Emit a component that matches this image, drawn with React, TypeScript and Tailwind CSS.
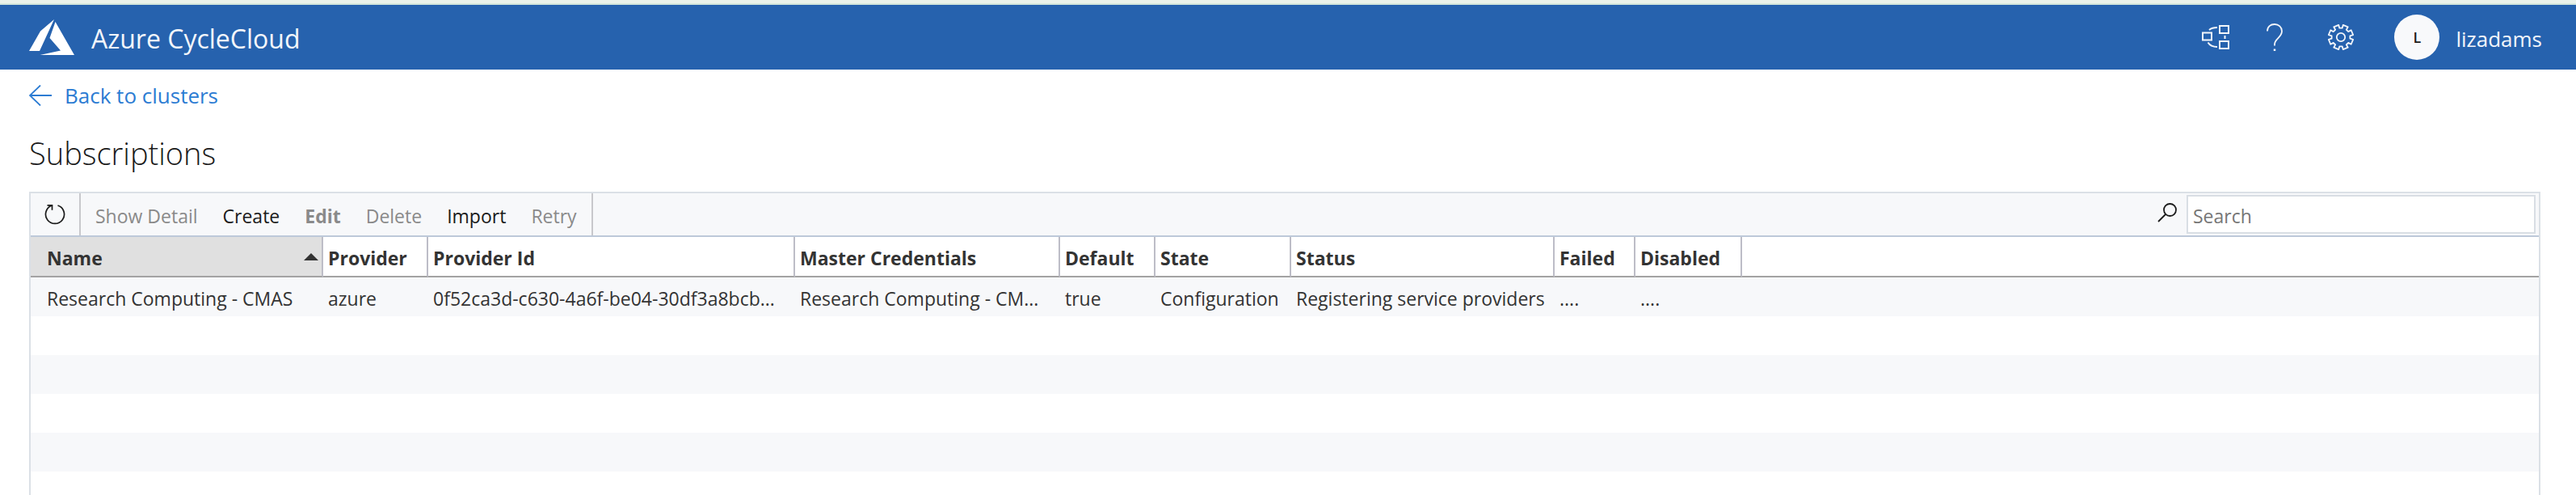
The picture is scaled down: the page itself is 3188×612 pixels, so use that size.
import React from "react";

const columns = [
  { label: "Name", width: "w-[362px]", value: "Research Computing - CMAS" },
  { label: "Provider", width: "w-[130px]", value: "azure" },
  { label: "Provider Id", width: "w-[454px]", value: "0f52ca3d-c630-4a6f-be04-30df3a8bcb..." },
  { label: "Master Credentials", width: "w-[328px]", value: "Research Computing - CM..." },
  { label: "Default", width: "w-[118px]", value: "true" },
  { label: "State", width: "w-[168px]", value: "Configuration" },
  { label: "Status", width: "w-[326px]", value: "Registering service providers" },
  { label: "Failed", width: "w-[100px]", value: "...." },
  { label: "Disabled", width: "w-[132px]", value: "...." },
];

const actions = [
  { label: "Show Detail", style: "text-[#8a8a8a]", disabled: true },
  { label: "Create", style: "text-[#1b1b1b]", disabled: false },
  { label: "Edit", style: "font-bold text-[#8a8a8a]", disabled: true },
  { label: "Delete", style: "text-[#8a8a8a]", disabled: true },
  { label: "Import", style: "text-[#1b1b1b]", disabled: false },
  { label: "Retry", style: "text-[#8a8a8a]", disabled: true },
];

function AzureLogo() {
  return (
    <svg className="h-11 w-14" viewBox="0 0 56 44" fill="#fff" aria-hidden="true">
      <path d="M31 0 14 14.5 0 39h13zM32.5 3l-7 20L39 38.5 13.5 44H56z" />
    </svg>
  );
}

function ClusterIcon() {
  return (
    <svg className="h-[30px] w-[34px]" viewBox="0 0 34 30" fill="none" stroke="#f2f5fa" strokeWidth="2" aria-hidden="true">
      <path d="M22 1h11v9H22zM1 9.500h11v9H1zM22 20h11v9H22zM28.500 13v4" />
      <path d="M9 6q3.500-3 10-3M7.500 21.500Q11 27 19 27" />
    </svg>
  );
}

function HelpIcon() {
  return (
    <svg className="h-[34px] w-5" viewBox="0 0 20 34" fill="none" stroke="#f2f5fa" strokeWidth="1.8" aria-hidden="true">
      <path d="M1 9.500C1 4 5 1 10 1s9 3.500 9 8.500c0 8-9 9-9 16.500v1.500" />
      <path d="M10 31.500V34" strokeWidth="2.5" />
    </svg>
  );
}

function GearIcon() {
  const teeth = Array.from({ length: 8 }, (_, i) => {
    const at = (r: number, d: number) => {
      const a = ((i * 45 + 22.5 + d) * Math.PI) / 180;
      return `${(16 + r * Math.cos(a)).toFixed(2)} ${(16 + r * Math.sin(a)).toFixed(2)}`;
    };
    return `${at(11.5, -14)} L${at(15.4, -12)} L${at(15.4, 12)} L${at(11.5, 14)}`;
  });
  return (
    <svg className="size-8" viewBox="0 0 32 32" fill="none" stroke="#f2f5fa" strokeWidth="1.8" strokeLinejoin="round" aria-hidden="true">
      <path d={`M${teeth.join(" L")}Z`} />
      <circle cx="16" cy="16" r="5.2" />
    </svg>
  );
}

export default function App() {
  return (
    <div className="h-screen overflow-hidden bg-white font-['Open_Sans','Noto_Sans',sans-serif] text-[#333]">
      <div className="h-1.5 border-b-2 border-[#d5e7dc] bg-[#eaf2ea]" />
      <header className="flex h-20 items-center justify-between bg-[#2662ae] pr-[42px] pl-9 text-[#f2f5fa]">
        <div className="flex items-center gap-[21px]">
          <AzureLogo />
          <span className="pt-1 text-[32px] leading-10">Azure CycleCloud</span>
        </div>
        <div className="flex items-center">
          <button type="button" aria-label="Clusters" className="mr-[46px]"><ClusterIcon /></button>
          <button type="button" aria-label="Help" className="mr-14"><HelpIcon /></button>
          <button type="button" aria-label="Settings" className="mr-[50px]"><GearIcon /></button>
          <button type="button" className="flex items-center gap-5 text-[26px]">
            <span className="flex size-14 items-center justify-center rounded-full bg-[#f8f9fb] text-lg font-semibold text-[#1b1b1b]">L</span>
            <span className="pt-1">lizadams</span>
          </button>
        </div>
      </header>

      <main className="flex flex-col px-9">
        <div className="pt-3">
          <a href="#clusters" className="inline-flex items-center gap-4 text-[26px] leading-10 text-[#2c7cd3]">
            <svg className="h-[26px] w-7" viewBox="0 0 28 26" fill="none" stroke="currentColor" strokeWidth="1.8" aria-hidden="true">
              <path d="M28 13H1M14 0.500 1 13l13 12.500" />
            </svg>
            Back to clusters
          </a>
        </div>
        <h1 className="mt-6 text-[38px] leading-[54px] font-light text-[#1b1b1b]">Subscriptions</h1>

        <section className="mr-2 mt-[21px] border-2 border-[#dbe0e6]">
          <div className="flex h-[54px] border-b-2 border-[#bdc9d9] bg-[#f7f8fa]">
            <button type="button" aria-label="Refresh" className="flex w-[62px] items-center justify-center border-r-2 border-[#c8c8cc]">
              <svg className="size-[26px]" viewBox="0 0 26 26" fill="none" stroke="#1b1b1b" strokeWidth="1.7" aria-hidden="true">
                <path d="M9.500 2A11.500 11.500 0 1 0 16.500 2M3.500 1.800H9.500V7.800" />
              </svg>
            </button>
            <div className="flex items-center gap-[31px] border-r-2 border-[#c8c8cc] px-[18px] pt-1 text-[23px]">
              {actions.map((a) => (
                <button key={a.label} type="button" disabled={a.disabled} className={a.style}>{a.label}</button>
              ))}
            </div>
            <label className="ml-auto flex items-center gap-3 pr-1">
              <svg className="mb-1 size-6" viewBox="0 0 24 24" fill="none" stroke="#1b1b1b" strokeWidth="1.8" aria-label="Search">
                <circle cx="15.5" cy="8.5" r="7.5" />
                <path d="M10 14 1 23" />
              </svg>
              <input type="search" placeholder="Search" className="h-12 w-[432px] border-2 border-[#d9dee4] bg-white px-1.5 pt-1 text-[23px] outline-none placeholder:text-[#767676]" />
            </label>
          </div>
          <table className="w-full table-fixed border-separate border-spacing-0 text-left text-[23px]">
            <thead>
              <tr className="h-[50px]">
                {columns.map((c, i) => (
                  <th
                    key={c.label}
                    scope="col"
                    className={`${c.width} border-r-2 border-b-2 border-r-[#bdbdc7] border-b-[#a3a3a3] pt-1 pr-1 pb-0 font-bold whitespace-nowrap ${i === 0 ? "bg-[#e0e0e0] pl-5" : "pl-1.5"}`}
                  >
                    <span className="flex items-center justify-between">
                      {c.label}
                      {i === 0 && (
                        <svg className="mb-1 h-[9px] w-[18px]" viewBox="0 0 18 9" fill="#333" aria-hidden="true"><path d="M9 0l9 9H0z" /></svg>
                      )}
                    </span>
                  </th>
                ))}
                <td className="border-b-2 border-[#a3a3a3]" />
              </tr>
            </thead>
            <tbody>
              <tr className="h-12 bg-[#f7f8fa]">
                {columns.map((c, i) => (
                  <td key={c.label} className={`pt-1 pb-0 whitespace-nowrap ${i === 0 ? "pl-5" : "pl-1.5"}`}>{c.value}</td>
                ))}
                <td />
              </tr>
              {[0, 1, 2, 3, 4, 5].map((n) => (
                <tr key={n} className="h-12 even:bg-white odd:bg-[#f7f8fa]">
                  <td colSpan={10} />
                </tr>
              ))}
            </tbody>
          </table>
        </section>
      </main>
    </div>
  );
}
